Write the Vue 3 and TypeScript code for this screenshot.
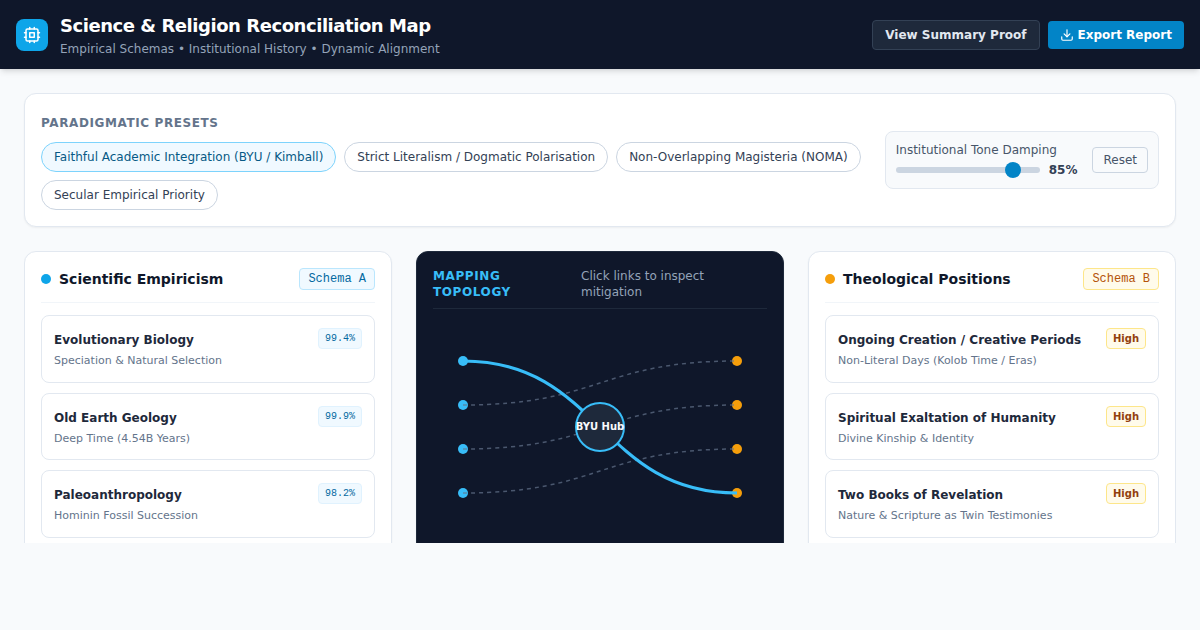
<script setup lang="ts">
import { ref } from 'vue';

const presets = [
  'Faithful Academic Integration (BYU / Kimball)',
  'Strict Literalism / Dogmatic Polarisation',
  'Non-Overlapping Magisteria (NOMA)',
  'Secular Empirical Priority',
];
const activePreset = ref(0);
const damping = ref(85);

const science = [
  { title: 'Evolutionary Biology', sub: 'Speciation & Natural Selection', val: '99.4%' },
  { title: 'Old Earth Geology', sub: 'Deep Time (4.54B Years)', val: '99.9%' },
  { title: 'Paleoanthropology', sub: 'Hominin Fossil Succession', val: '98.2%' },
];
const theology = [
  { title: 'Ongoing Creation / Creative Periods', sub: 'Non-Literal Days (Kolob Time / Eras)', val: 'High' },
  { title: 'Spiritual Exaltation of Humanity', sub: 'Divine Kinship & Identity', val: 'High' },
  { title: 'Two Books of Revelation', sub: 'Nature & Scripture as Twin Testimonies', val: 'High' },
];

const ys = [40, 84, 128, 172];
const leftX = 30;
const rightX = 304;
const midX = 167;

function link(y1: number, y2: number) {
  return `M${leftX} ${y1} C${midX} ${y1} ${midX} ${y2} ${rightX} ${y2}`;
}
</script>

<template>
  <div class="page">
    <header class="topbar">
      <div class="brand">
        <div class="logo">
          <svg width="18" height="18" viewBox="0 0 24 24" fill="none" stroke="currentColor" stroke-width="2" stroke-linecap="round" stroke-linejoin="round">
            <rect x="4" y="4" width="16" height="16" rx="2" />
            <rect x="9" y="9" width="6" height="6" />
            <path d="M15 2v2M15 20v2M2 15h2M2 9h2M20 15h2M20 9h2M9 2v2M9 20v2" />
          </svg>
        </div>
        <div>
          <h1>Science &amp; Religion Reconciliation Map</h1>
          <p>Empirical Schemas • Institutional History • Dynamic Alignment</p>
        </div>
      </div>
      <div class="actions">
        <button class="btn-ghost">View Summary Proof</button>
        <button class="btn-primary">
          <svg width="14" height="14" viewBox="0 0 24 24" fill="none" stroke="currentColor" stroke-width="2" stroke-linecap="round" stroke-linejoin="round">
            <path d="M12 15V3" />
            <path d="M21 15v4a2 2 0 0 1-2 2H5a2 2 0 0 1-2-2v-4" />
            <path d="m7 10 5 5 5-5" />
          </svg>
          Export Report
        </button>
      </div>
    </header>

    <main class="content">
      <section class="presets card">
        <div class="presets-left">
          <div class="presets-label">Paradigmatic Presets</div>
          <div class="chips">
            <button
              v-for="(p, i) in presets"
              :key="p"
              class="chip"
              :class="{ active: i === activePreset }"
              @click="activePreset = i"
            >{{ p }}</button>
          </div>
        </div>
        <div class="damping">
          <div class="damping-main">
            <div class="damping-label">Institutional Tone Damping</div>
            <div class="damping-row">
              <input v-model.number="damping" class="slider" type="range" min="0" max="100" />
              <span class="damping-val">{{ damping }}%</span>
            </div>
          </div>
          <button class="reset" @click="damping = 85">Reset</button>
        </div>
      </section>

      <section class="columns">
        <div class="card column">
          <div class="col-head">
            <div class="col-title"><span class="dot dot-blue"></span>Scientific Empiricism</div>
            <span class="schema schema-a">Schema A</span>
          </div>
          <div class="items">
            <div v-for="it in science" :key="it.title" class="item">
              <div class="item-top">
                <span class="item-title">{{ it.title }}</span>
                <span class="val val-a">{{ it.val }}</span>
              </div>
              <div class="item-sub">{{ it.sub }}</div>
            </div>
          </div>
        </div>

        <div class="column dark">
          <div class="map-head">
            <div class="map-title">Mapping Topology</div>
            <div class="map-hint">Click links to inspect mitigation</div>
          </div>
          <svg class="map" viewBox="0 0 334 220" width="334" height="220">
            <circle v-for="y in ys" :key="'l' + y" :cx="leftX" :cy="y" r="5" fill="#38bdf8" />
            <circle v-for="y in ys" :key="'r' + y" :cx="rightX" :cy="y" r="5" fill="#f59e0b" />
            <path :d="link(ys[1], ys[0])" class="link" />
            <path :d="link(ys[2], ys[1])" class="link" />
            <path :d="link(ys[3], ys[2])" class="link" />
            <path :d="link(ys[0], ys[3])" class="link-on" />
            <circle :cx="midX" cy="106" r="24" fill="#1e293b" stroke="#38bdf8" stroke-width="2" />
            <text :x="midX" y="109" text-anchor="middle" class="hub-text">BYU Hub</text>
          </svg>
        </div>

        <div class="card column">
          <div class="col-head">
            <div class="col-title"><span class="dot dot-amber"></span>Theological Positions</div>
            <span class="schema schema-b">Schema B</span>
          </div>
          <div class="items">
            <div v-for="it in theology" :key="it.title" class="item">
              <div class="item-top">
                <span class="item-title">{{ it.title }}</span>
                <span class="val val-b">{{ it.val }}</span>
              </div>
              <div class="item-sub">{{ it.sub }}</div>
            </div>
          </div>
        </div>
      </section>
    </main>
  </div>
</template>

<style>
body {
  background: #f8fafc;
}
</style>

<style scoped>
.page {
  font-family: 'DejaVu Sans', sans-serif;
  height: 630px;
  overflow: hidden;
  background: #f8fafc;
  color: #0f172a;
}

button {
  font-family: inherit;
  cursor: pointer;
}

.topbar {
  position: relative;
  z-index: 2;
  display: flex;
  align-items: center;
  justify-content: space-between;
  height: 69px;
  box-sizing: border-box;
  padding: 0 16px;
  background: #0f172a;
  box-shadow: 0 4px 6px -1px rgba(0, 0, 0, 0.1), 0 2px 4px -2px rgba(0, 0, 0, 0.1);
}

.brand {
  display: flex;
  align-items: center;
  gap: 12px;
}

.logo {
  display: flex;
  align-items: center;
  justify-content: center;
  width: 32px;
  height: 32px;
  border-radius: 8px;
  background: #0ea5e9;
  color: #fff;
}

h1 {
  margin: 0;
  font-size: 18px;
  line-height: 26px;
  font-weight: 700;
  letter-spacing: -0.45px;
  color: #fff;
}

.brand p {
  margin: 2px 0 0;
  font-size: 12px;
  line-height: 16px;
  color: #94a3b8;
}

.actions {
  display: flex;
  align-items: center;
  gap: 8px;
}

.btn-ghost,
.btn-primary {
  font-size: 12px;
  font-weight: 700;
  border-radius: 4px;
}

.btn-ghost {
  height: 30px;
  padding: 0 12px;
  background: #1e293b;
  border: 1px solid #334155;
  color: #e2e8f0;
}

.btn-primary {
  display: flex;
  align-items: center;
  gap: 4px;
  height: 28px;
  padding: 0 12px;
  background: #0284c7;
  border: 0;
  color: #fff;
}

.content {
  padding: 24px;
}

.card {
  box-sizing: border-box;
  background: #fff;
  border: 1px solid #e2e8f0;
  border-radius: 12px;
  box-shadow: 0 1px 2px rgba(0, 0, 0, 0.05);
}

.presets {
  display: flex;
  align-items: center;
  justify-content: space-between;
  gap: 24px;
  padding: 16px;
}

.presets-left {
  flex: 1;
}

.presets-label {
  font-size: 12px;
  line-height: 16px;
  font-weight: 700;
  letter-spacing: 0.6px;
  text-transform: uppercase;
  color: #64748b;
  margin-bottom: 11px;
  margin-top: 5px;
}

.chips {
  display: flex;
  flex-wrap: wrap;
  gap: 8px;
}

.chip {
  padding: 6px 12px;
  font-size: 12px;
  line-height: 16px;
  color: #334155;
  background: #fff;
  border: 1px solid #cbd5e1;
  border-radius: 15px;
}

.chip.active {
  color: #075985;
  background: #f0f9ff;
  border-color: #7dd3fc;
}

.damping {
  display: flex;
  align-items: center;
  gap: 15px;
  flex-shrink: 0;
  padding: 10px;
  background: #f8fafc;
  border: 1px solid #e2e8f0;
  border-radius: 8px;
}

.damping-label {
  font-size: 12px;
  line-height: 16px;
  color: #475569;
}

.damping-row {
  display: flex;
  align-items: center;
  gap: 9px;
  margin-top: 4px;
}

.slider {
  appearance: none;
  -webkit-appearance: none;
  display: block;
  width: 144px;
  height: 6px;
  margin: 0;
  border-radius: 3px;
  background: #cbd5e1;
  outline: none;
}

.slider::-webkit-slider-thumb {
  -webkit-appearance: none;
  width: 16px;
  height: 16px;
  border-radius: 50%;
  background: #0284c7;
  border: 0;
}

.damping-val {
  font-size: 12px;
  font-weight: 700;
  line-height: 16px;
  color: #334155;
}

.reset {
  height: 26px;
  padding: 0 10px;
  font-size: 12px;
  color: #475569;
  background: #f8fafc;
  border: 1px solid #cbd5e1;
  border-radius: 4px;
}

.columns {
  display: grid;
  grid-template-columns: repeat(3, 1fr);
  gap: 24px;
  height: 292px;
  margin-top: 24px;
  overflow: hidden;
}

.column {
  box-sizing: border-box;
  height: 340px;
  padding: 16px;
}

.col-head {
  display: flex;
  align-items: center;
  justify-content: space-between;
  padding-bottom: 12px;
  border-bottom: 1px solid #f1f5f9;
}

.col-title {
  display: flex;
  align-items: center;
  gap: 8px;
  font-size: 14px;
  line-height: 20px;
  font-weight: 700;
  color: #0f172a;
}

.dot {
  width: 10px;
  height: 10px;
  border-radius: 50%;
}

.dot-blue {
  background: #0ea5e9;
}

.dot-amber {
  background: #f59e0b;
}

.schema {
  font-family: 'Liberation Mono', monospace;
  font-size: 12px;
  line-height: 16px;
  padding: 2px 8px;
  border-radius: 4px;
  border: 1px solid;
}

.schema-a {
  color: #0369a1;
  background: #f0f9ff;
  border-color: #bae6fd;
}

.schema-b {
  color: #b45309;
  background: #fffbeb;
  border-color: #fde68a;
}

.items {
  display: flex;
  flex-direction: column;
  gap: 10px;
  margin-top: 12px;
}

.item {
  box-sizing: border-box;
  height: 67.5px;
  padding: 12px;
  border: 1px solid #e2e8f0;
  border-radius: 8px;
  background: #fff;
}

.item-top {
  display: flex;
  align-items: flex-start;
  justify-content: space-between;
}

.item-title {
  font-size: 12px;
  line-height: 24px;
  font-weight: 700;
  color: #1e293b;
}

.val {
  line-height: 15px;
  padding: 2px 6px;
  border-radius: 4px;
  border: 1px solid;
}

.val-a {
  font-family: 'Liberation Mono', monospace;
  font-size: 10px;
  color: #0369a1;
  background: #f0f9ff;
  border-color: #e0f2fe;
}

.val-b {
  font-size: 10px;
  font-weight: 700;
  color: #92400e;
  background: #fffbeb;
  border-color: #fde68a;
}

.item-sub {
  margin-top: 1px;
  font-size: 11px;
  line-height: 16px;
  color: #64748b;
}

.dark {
  background: #0f172a;
  border: 1px solid #1e293b;
  border-radius: 12px;
  box-shadow: 0 1px 2px rgba(0, 0, 0, 0.05);
}

.map-head {
  display: grid;
  grid-template-columns: 148px 1fr;
  padding-bottom: 8px;
  border-bottom: 1px solid #1e293b;
}

.map-title {
  font-size: 12px;
  line-height: 16px;
  font-weight: 700;
  letter-spacing: 0.6px;
  text-transform: uppercase;
  color: #38bdf8;
}

.map-hint {
  font-size: 12px;
  line-height: 16px;
  color: #94a3b8;
}

.map {
  display: block;
  margin-top: 12px;
}

.link {
  fill: none;
  stroke: #64748b;
  stroke-opacity: 0.7;
  stroke-width: 1.5;
  stroke-dasharray: 4 4;
}

.link-on {
  fill: none;
  stroke: #38bdf8;
  stroke-width: 3;
}

.hub-text {
  font-size: 10px;
  font-weight: 700;
  fill: #f8fafc;
}
</style>
